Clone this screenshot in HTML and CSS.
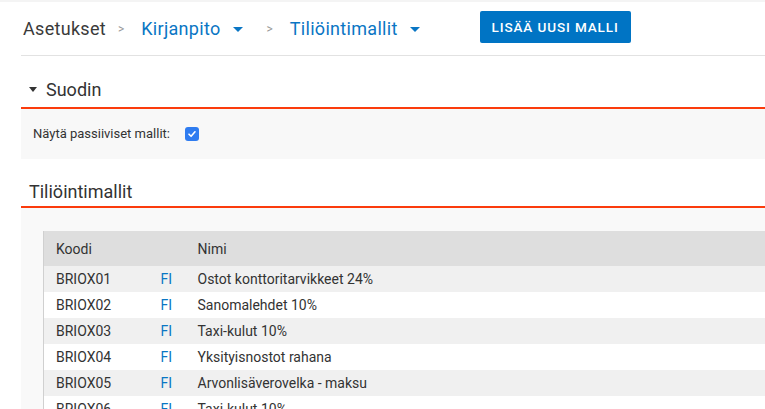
FILE: index.html
```html
<!DOCTYPE html>
<html lang="fi">
<head>
<meta charset="utf-8">
<title>Tiliöintimallit</title>
<link rel="stylesheet" href="styles.css">
</head>
<body>
<div class="topstrip"></div>
<div class="page">
  <header class="header">
    <nav class="crumbs">
      <span class="crumb-root">Asetukset</span>
      <span class="sep">&gt;</span>
      <span class="crumb-link">Kirjanpito<span class="caret"></span></span>
      <span class="sep">&gt;</span>
      <span class="crumb-link">Tiliöintimallit<span class="caret"></span></span>
    </nav>
    <button class="btn-primary">LISÄÄ UUSI MALLI</button>
  </header>

  <section class="section">
    <h2 class="section-title"><span class="tri"></span>Suodin</h2>
    <div class="filter-body">
      <label class="filter-label">Näytä passiiviset mallit:</label>
      <span class="checkbox">
        <svg width="10" height="10" viewBox="0 0 10 10"><path d="M2 5.2 L4.1 7.3 L8 2.8" fill="none" stroke="#fff" stroke-width="1.6" stroke-linecap="round" stroke-linejoin="round"/></svg>
      </span>
    </div>
  </section>

  <section class="section list">
    <h2 class="section-title plain">Tiliöintimallit</h2>
    <div class="list-body">
      <table class="grid">
        <thead>
          <tr><th class="c-code">Koodi</th><th class="c-lang"></th><th class="c-name">Nimi</th></tr>
        </thead>
        <tbody>
          <tr><td>BRIOX01</td><td class="lang">FI</td><td>Ostot konttoritarvikkeet 24%</td></tr>
          <tr><td>BRIOX02</td><td class="lang">FI</td><td>Sanomalehdet 10%</td></tr>
          <tr><td>BRIOX03</td><td class="lang">FI</td><td>Taxi-kulut 10%</td></tr>
          <tr><td>BRIOX04</td><td class="lang">FI</td><td>Yksityisnostot rahana</td></tr>
          <tr><td>BRIOX05</td><td class="lang">FI</td><td>Arvonlisäverovelka - maksu</td></tr>
          <tr><td>BRIOX06</td><td class="lang">FI</td><td>Taxi-kulut 10%</td></tr>
        </tbody>
      </table>
    </div>
  </section>
</div>
</body>
</html>
```

FILE: styles.css
```css
* { box-sizing: border-box; }
html, body { margin: 0; padding: 0; background: #fff; }
body {
  font-family: Roboto, "Liberation Sans", Arial, sans-serif;
  color: #333;
  overflow: hidden;
  height: 409px;
}
.topstrip { height: 2px; background: #f4f4f4; }
.page { padding-left: 21px; }

.header {
  height: 54px;
  border-bottom: 1px solid #e2e2e2;
  display: flex;
  align-items: center;
  padding-left: 2px;
}
.crumbs {
  display: flex;
  align-items: center;
  font-size: 18px;
  letter-spacing: 0.3px;
}
.crumb-root { color: #3a3a3a; }
.sep {
  color: #999;
  font-size: 12px;
  letter-spacing: 0;
  margin: 0 17px 0 12px;
}
.crumb-link { color: #0a76c4; display: inline-flex; align-items: center; }
.caret {
  display: inline-block;
  width: 0; height: 0;
  border-left: 5.5px solid transparent;
  border-right: 5.5px solid transparent;
  border-top: 5.5px solid #0a76c4;
  margin-left: 12px;
  margin-right: 12px;
  margin-top: 2px;
}
.btn-primary {
  margin-left: 48px;
  margin-top: -3px;
  height: 32px;
  width: 151px;
  background: #0074c4;
  color: #fff;
  border: none;
  border-radius: 2px;
  font-family: Roboto, "Liberation Sans", Arial, sans-serif;
  font-size: 13.5px;
  font-weight: 500;
  letter-spacing: 0.9px;
  padding: 0;
}

.section-title {
  margin: 0;
  font-weight: 400;
  font-size: 18px;
  color: #333;
  display: flex;
  align-items: center;
  height: 53px;
  padding-top: 15px;
  padding-left: 8px;
  border-bottom: 2px solid #fb3b0c;
}
.tri {
  width: 0; height: 0;
  border-left: 4.5px solid transparent;
  border-right: 4.5px solid transparent;
  border-top: 5px solid #333;
  margin-right: 9px;
  margin-top: 1px;
}
.filter-body {
  background: #f8f8f8;
  height: 50px;
  display: flex;
  align-items: center;
  padding-left: 12px;
  padding-bottom: 1px;
}
.filter-label { font-size: 13px; color: #333; }
.checkbox {
  width: 14px; height: 14px;
  border-radius: 3px;
  background: #2f7cf0;
  margin-left: 15px;
  display: flex;
  align-items: center;
  justify-content: center;
}

.list .section-title.plain {
  height: 49px;
  padding-left: 8px;
  padding-top: 17px;
}
.list-body {
  background: #f9f9f9;
  padding: 23px 0 0 22px;
  height: 220px;
}
.grid {
  width: 100%;
  border-collapse: collapse;
  border-left: 1px solid #d0d0d0;
  font-size: 14px;
  color: #333;
}
.grid th {
  background: #dedede;
  font-weight: 400;
  text-align: left;
  height: 35px;
  padding: 0;
}
.grid td { height: 26px; padding: 0; }
.grid tbody tr:nth-child(odd) { background: #f0f0f0; }
.grid tbody tr:nth-child(even) { background: #fff; }
.grid th:first-child, .grid td:first-child { padding-left: 12px; width: 117px; }
.grid .c-lang, .grid td.lang { width: 37px; }
.lang { color: #0a76c4; }
```
